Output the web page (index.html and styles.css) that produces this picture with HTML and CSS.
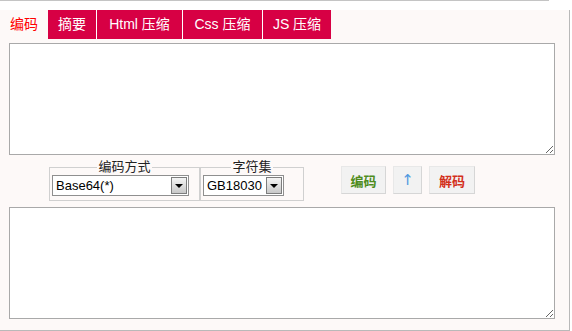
FILE: index.html
```html
<!DOCTYPE html>
<html lang="zh-CN">
<head>
    <meta charset="UTF-8">
    <title>编码工具</title>
    <link rel="stylesheet" href="styles.css">
</head>
<body>
    <div class="topbar"></div>
    <div class="panel">
        <ul class="tabs">
            <li class="tab tab-active">编码</li>
            <li class="tab tab-digest">摘要</li>
            <li class="tab tab-html">Html 压缩</li>
            <li class="tab tab-css">Css 压缩</li>
            <li class="tab tab-js">JS 压缩</li>
        </ul>

        <textarea class="box" id="source"></textarea>

        <div class="controls">
            <fieldset class="group group-method">
                <legend>编码方式</legend>
                <div class="select select-method">
                    <select id="method"><option>Base64(*)</option></select>
                    <span class="arrow"></span>
                </div>
            </fieldset>
            <fieldset class="group group-charset">
                <legend>字符集</legend>
                <div class="select select-charset">
                    <select id="charset"><option>GB18030</option></select>
                    <span class="arrow"></span>
                </div>
            </fieldset>
            <div class="actions">
                <button class="btn btn-encode">编码</button>
                <button class="btn btn-up">↑</button>
                <button class="btn btn-decode">解码</button>
            </div>
        </div>

        <textarea class="box box-result" id="result"></textarea>
    </div>
</body>
</html>
```

FILE: styles.css
```css
* {
    box-sizing: border-box;
}

body {
    margin: 0;
    background: #ffffff;
    font-family: "Liberation Sans", "Noto Sans CJK SC", sans-serif;
}

.topbar {
    width: 549px;
    height: 1px;
    background: #c4c4c4;
    margin-bottom: 9px;
}

.panel {
    width: 570px;
    height: 321px;
    background: #fdf9f8;
    border-right: 1px solid #b9b9b9;
    border-bottom: 1px solid #b9b9b9;
}

/* tabs */
.tabs {
    display: flex;
    list-style: none;
    margin: 0;
    padding: 0;
    height: 29px;
}

.tab {
    height: 29px;
    line-height: 29px;
    font-size: 14px;
    text-align: center;
    color: #ffffff;
    background: #d70044;
    cursor: pointer;
}

.tab-active {
    width: 48px;
    color: #ff0000;
    background: transparent;
}

.tab-digest {
    width: 48px;
}

.tab-html {
    width: 86px;
    border-left: 1px solid #ffffff;
}

.tab-css {
    width: 80px;
    border-left: 1px solid #ffffff;
}

.tab-js {
    width: 69px;
    border-left: 1px solid #ffffff;
}

/* text areas */
.box {
    display: block;
    width: 546px;
    height: 112px;
    margin: 4px 0 0 9px;
    padding: 2px;
    border: 1px solid #a9a9a9;
    background: #ffffff;
    font-family: "Liberation Mono", monospace;
    font-size: 13px;
}

.box-result {
    margin-top: 7px;
}

/* controls row */
.controls {
    display: flex;
    align-items: flex-start;
    margin: 5px 0 0 49px;
    height: 40px;
}

.group {
    margin: 0;
    padding: 0 2px 2px;
    height: 41px;
    border: 1px solid #d0d0d0;
    min-width: 0;
}

.group legend {
    margin: 0 auto;
    padding: 0 1px;
    font-size: 13px;
    line-height: 14px;
    color: #222222;
}

.group-method {
    width: 151px;
}

.group-charset {
    width: 104px;
}

.select {
    display: flex;
    height: 21px;
    margin-top: 1px;
    border: 1px solid #8f8f8f;
    background: #ffffff;
}

.select-method {
    width: 137px;
}

.select-charset {
    width: 81px;
}

.select select {
    flex: 1;
    min-width: 0;
    -webkit-appearance: none;
    appearance: none;
    border: 0;
    outline: none;
    background: #ffffff;
    padding: 0 0 0 3px;
    font-family: "Liberation Sans", sans-serif;
    font-size: 13px;
    color: #000000;
}

.arrow {
    display: flex;
    align-items: center;
    justify-content: center;
    width: 16px;
    margin: 1px;
    border: 1px solid #7d7d7d;
    background: linear-gradient(#f4f4f4, #c8c8c8);
}

.arrow::after {
    content: "";
    border-left: 4px solid transparent;
    border-right: 4px solid transparent;
    border-top: 4px solid #000000;
}

/* action buttons */
.actions {
    display: flex;
    gap: 7px;
    margin: 6px 0 0 37px;
}

.btn {
    height: 28px;
    padding: 0;
    border: 1px solid;
    border-color: #e8e8e8 #d6d6d6 #d6d6d6 #e8e8e8;
    background: #f2f2f2;
    font-family: "Liberation Sans", "Noto Sans CJK SC", sans-serif;
    font-size: 13px;
    font-weight: bold;
    cursor: pointer;
}

.btn-encode {
    width: 45px;
    color: #4e8c1c;
}

.btn-up {
    width: 29px;
    color: #4f98e0;
    font-family: "DejaVu Sans", sans-serif;
    font-size: 15px;
    font-weight: normal;
}

.btn-decode {
    width: 46px;
    color: #d3301c;
}
```
